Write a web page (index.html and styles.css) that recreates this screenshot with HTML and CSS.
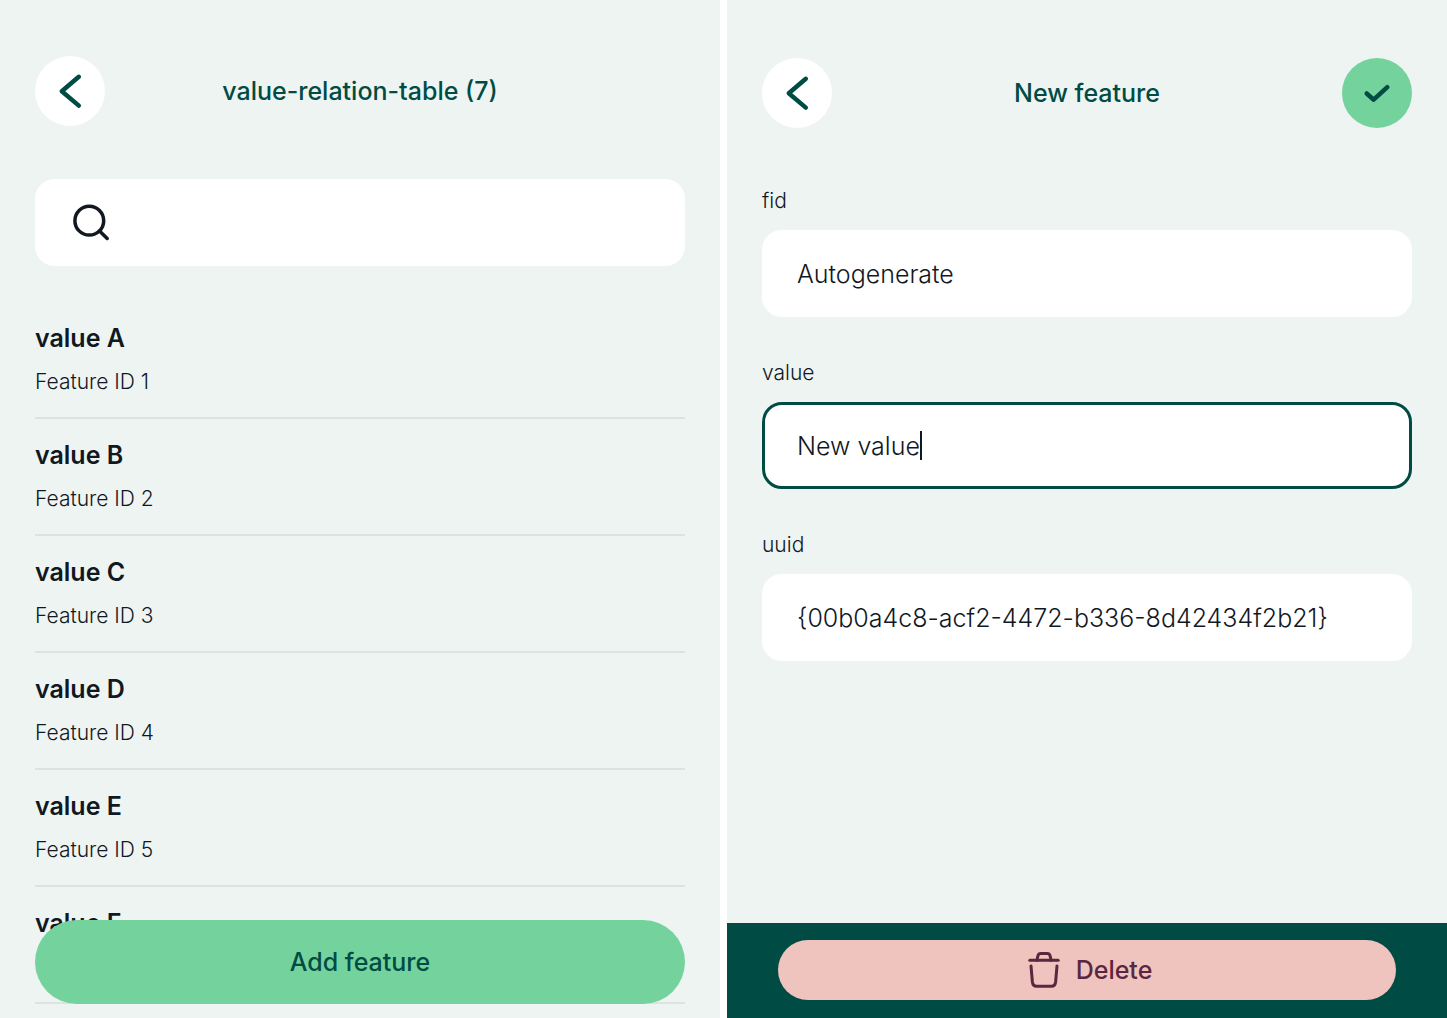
FILE: index.html
```html
<!DOCTYPE html>
<html lang="en">
<head>
<meta charset="utf-8">
<meta name="viewport" content="width=device-width, initial-scale=1">
<title>New feature</title>
<link rel="stylesheet" href="styles.css">
</head>
<body>
<main class="screens">
  <section class="panel panel-list">
    <header class="header">
      <button class="round-button" type="button" aria-label="Back">
        <svg class="icon" width="70" height="70" viewBox="0 0 70 70"><path class="chevron" d="M43.800 20.800 L26.800 35.200 L43.800 49.600"/></svg>
      </button>
      <h1 class="title">value-relation-table (7)</h1>
    </header>
    <label class="search">
      <svg class="icon" width="40" height="40" viewBox="0 0 40 40"><g class="search-lines"><circle cx="19.300" cy="17.700" r="14.400"/><path d="M29.500 27.900 L37.200 35.500"/></g></svg>
      <input class="search-input" type="search" aria-label="Search">
    </label>
    <ul class="list">
      <li class="row"><span class="row-title">value A</span><span class="row-note">Feature ID 1</span></li>
      <li class="row"><span class="row-title">value B</span><span class="row-note">Feature ID 2</span></li>
      <li class="row"><span class="row-title">value C</span><span class="row-note">Feature ID 3</span></li>
      <li class="row"><span class="row-title">value D</span><span class="row-note">Feature ID 4</span></li>
      <li class="row"><span class="row-title">value E</span><span class="row-note">Feature ID 5</span></li>
      <li class="row"><span class="row-title">value F</span><span class="row-note">Feature ID 6</span></li>
    </ul>
    <button class="add-button" type="button">Add feature</button>
  </section>

  <section class="panel panel-form">
    <header class="header">
      <button class="round-button" type="button" aria-label="Back">
        <svg class="icon" width="70" height="70" viewBox="0 0 70 70"><path class="chevron" d="M43.800 20.800 L26.800 35.200 L43.800 49.600"/></svg>
      </button>
      <h1 class="title">New feature</h1>
      <button class="round-button confirm" type="button" aria-label="Save">
        <svg class="icon" width="70" height="70" viewBox="0 0 70 70"><path class="check" d="M24.700 35.500 L31.700 41.700 L45.300 29.200"/></svg>
      </button>
    </header>
    <form class="form">
      <div class="field">
        <label class="label" for="fid">fid</label>
        <div class="box"><input class="input" id="fid" type="text" value="Autogenerate"></div>
      </div>
      <div class="field">
        <label class="label" for="value">value</label>
        <div class="box box-active"><input class="input input-fit" id="value" type="text" value="New value"><span class="caret"></span></div>
      </div>
      <div class="field">
        <label class="label" for="uuid">uuid</label>
        <div class="box"><input class="input" id="uuid" type="text" value="{00b0a4c8-acf2-4472-b336-8d42434f2b21}"></div>
      </div>
    </form>
    <footer class="footer">
      <button class="delete-button" type="button">
        <svg class="icon" width="34" height="38" viewBox="0 0 34 38"><g class="trash-lines"><path d="M2.800 9.200 H31.200"/><path d="M9.900 9.200 L10.900 4.800 Q11.500 2.500 13.800 2.500 H20.200 Q22.500 2.500 23.100 4.800 L24.100 9.200"/><path d="M4 15 L5.400 31 Q5.900 35.200 9.700 35.200 H24.300 Q28.100 35.200 28.600 31 L30 15"/></g></svg>
        <span>Delete</span>
      </button>
    </footer>
  </section>
</main>
</body>
</html>
```
FILE: styles.css
```css
* {
  box-sizing: border-box;
}

body {
  margin: 0;
  background: #ffffff;
  color: #12181f;
  font-family: Inter, "Liberation Sans", sans-serif;
  font-size: 25px;
}

button,
input {
  border: 0;
  padding: 0;
  font: inherit;
  color: inherit;
}

button {
  cursor: pointer;
}

.screens {
  display: grid;
  grid-template-columns: 1fr 1fr;
  gap: 7px;
  height: 100vh;
}

.panel {
  position: relative;
  display: flex;
  flex-direction: column;
  min-width: 0;
  overflow: hidden;
  background: #eef4f2;
}

.panel-list {
  padding: 56px 35px 0;
}

.panel-form {
  padding-top: 58px;
}

.panel-form .header {
  padding: 0 35px;
}

.header {
  display: grid;
  grid-template-columns: 70px 1fr 70px;
  align-items: center;
}

.icon {
  display: block;
  flex: none;
  fill: none;
  stroke-linecap: round;
  stroke-linejoin: round;
}

.round-button {
  width: 70px;
  height: 70px;
  border-radius: 50%;
  background: #ffffff;
}

.chevron {
  stroke: #004c45;
  stroke-width: 4.500;
}

.confirm {
  background: #74d39c;
}

.check {
  stroke: #004c45;
  stroke-width: 4.500;
}

.title {
  margin: 0;
  color: #004c45;
  font-size: 25px;
  font-weight: 500;
  line-height: 30px;
  text-align: center;
}

.search {
  display: flex;
  align-items: center;
  gap: 16px;
  height: 87px;
  margin-top: 53px;
  padding: 0 35px;
  border-radius: 20px;
  background: #ffffff;
}

.search-input {
  flex: 1;
  min-width: 0;
  background: transparent;
  outline: 0;
}

.search-lines {
  stroke: #12181f;
  stroke-width: 3.500;
}

.list {
  margin: 36px 0 0;
  padding: 0;
  list-style: none;
}

.row {
  display: flex;
  flex-direction: column;
  gap: 15px;
  height: 117px;
  padding-top: 21px;
  border-bottom: 2px solid #e0e2e1;
}

.row-title {
  font-weight: 600;
  line-height: 30px;
}

.row-note {
  font-size: 21px;
  font-weight: 300;
  line-height: 28px;
}

.add-button {
  position: absolute;
  right: 35px;
  bottom: 14px;
  left: 35px;
  height: 84px;
  border-radius: 42px;
  background: #74d39c;
  color: #004c45;
  font-weight: 500;
}

.form {
  display: flex;
  flex-direction: column;
  gap: 42px;
  margin-top: 59px;
  padding: 0 35px;
}

.field {
  display: flex;
  flex-direction: column;
  gap: 15px;
}

.label {
  font-size: 21px;
  font-weight: 300;
  line-height: 28px;
}

.box {
  display: flex;
  align-items: center;
  height: 87px;
  padding: 0 32px;
  border: 3px solid #ffffff;
  border-radius: 20px;
  background: #ffffff;
}

.box-active {
  border-color: #004c45;
}

.input {
  flex: 1;
  min-width: 0;
  background: transparent;
  font-weight: 300;
  outline: 0;
}

.input-fit {
  flex: none;
  field-sizing: content;
}

.caret {
  width: 2px;
  height: 29px;
  background: #12181f;
}

.footer {
  margin-top: auto;
  padding: 17px 51px 18px;
  background: #004c45;
}

.delete-button {
  display: flex;
  align-items: center;
  justify-content: center;
  gap: 15px;
  width: 100%;
  height: 60px;
  padding-left: 5px;
  border-radius: 30px;
  background: #f0c4be;
  color: #5a2640;
  font-weight: 500;
}

.trash-lines {
  stroke: #5a2640;
  stroke-width: 3;
}
```
